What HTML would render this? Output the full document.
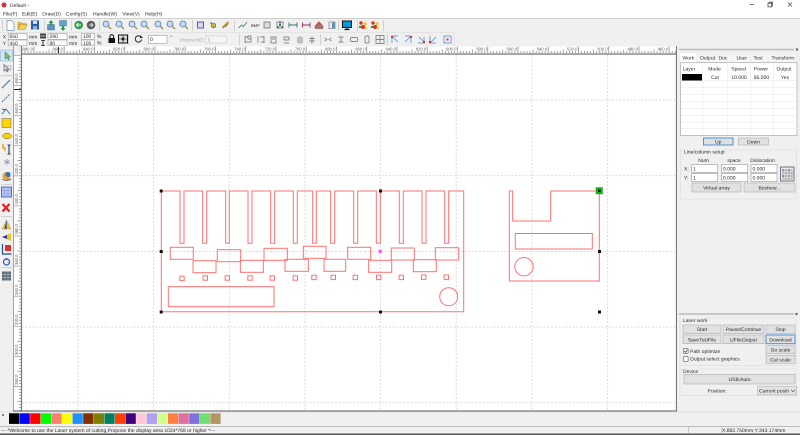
<!DOCTYPE html>
<html><head><meta charset="utf-8"><title>Default -</title>
<style>
html,body{margin:0;padding:0;background:#f0f0f0;overflow:hidden}
svg{display:block;filter:blur(.3px)}
text{font-family:"Liberation Sans",sans-serif;font-size:5px;fill:#2a2a2a;text-rendering:geometricPrecision}
.c{text-anchor:middle}
.r{font-size:4.2px;text-anchor:end;fill:#555}
.v{font-size:4.2px;fill:#555}
.b{fill:#e1e1e1;stroke:#adadad;stroke-width:.6}
.i{fill:#fff;stroke:#999;stroke-width:.6}
.s{stroke:#d0d0d0;stroke-width:1}
.d{stroke:#cfcfcf;stroke-width:.9;stroke-dasharray:1.6 2;fill:none}
.p{fill:none;stroke:#ff7070;stroke-width:1}
.g{fill:#222}
</style></head><body>
<svg width="800" height="435" viewBox="0 0 800 435" xmlns="http://www.w3.org/2000/svg">
<defs>
<pattern id="hr" width="30.25" height="8" patternUnits="userSpaceOnUse" x="3.2" y="46">
<path d="M.5 0V7M3.5 5V7M6.5 5V7M9.6 5V7M12.6 5V7M15.6 3.5V7M18.7 5V7M21.7 5V7M24.7 5V7M27.7 5V7" stroke="#666" stroke-width=".6" fill="none"/>
</pattern>
<pattern id="vr" width="8" height="30.1" patternUnits="userSpaceOnUse" x="14" y="85">
<path d="M0 .5H7M5 3.5H7M5 6.5H7M5 9.5H7M5 12.5H7M3.5 15.5H7M5 18.5H7M5 21.5H7M5 24.5H7M5 27.5H7" stroke="#666" stroke-width=".6" fill="none"/>
</pattern>
<g id="zm"><circle cx="-1" cy="-1" r="3" fill="#c8dcf0" stroke="#5478b4" stroke-width=".8"/><path d="M1.4 1.4L4 4" stroke="#9a8a40" stroke-width="1.3"/></g>
<g id="st"><rect x="-3" y="-3" width="6" height="6" fill="#fff" stroke="#555" stroke-width=".7"/><path d="M-1 -1h2v2h-2z" fill="#555"/></g>
<g id="sq"><circle cx="-2" cy="-2" r="1.7" fill="#e03020"/><circle cx="2" cy="-1" r="1.7" fill="#e8c820"/><circle cx="0" cy="2" r="2" fill="#e03020"/><circle cx="-3" cy="2" r="1.1" fill="#2a8a2a"/><circle cx="3" cy="3" r="1.1" fill="#e8c820"/></g>
</defs>

<!-- title bar -->
<rect width="800" height="18" fill="#fff"/>
<path d="M4 2.2v5.6M1.4 5h5.2M2.2 3.2l3.6 3.6M5.8 3.2l-3.6 3.6" stroke="#d8202a" stroke-width="1.2"/>
<text x="10" y="7">Default -</text>
<text x="3" y="15.5">File(F)</text><text x="22" y="15.5">Edit(E)</text><text x="42.3" y="15.5">Draw(D)</text><text x="66" y="15.5">Config(S)</text><text x="93" y="15.5">Handle(W)</text><text x="122.3" y="15.5">View(V)</text><text x="145" y="15.5">Help(H)</text>
<path d="M749.5 4.5h4.5" stroke="#555" stroke-width=".8"/>
<path d="M768 3.2h3.6v3.6h-3.6zM769 3.2v-1h3.6v3.6h-1" fill="none" stroke="#555" stroke-width=".8"/>
<path d="M788 2.5l4 4M792 2.5l-4 4" stroke="#555" stroke-width=".8"/>

<!-- toolbars -->
<rect y="18" width="800" height="29" fill="#f0f0f0"/>
<path d="M0 18.5H800" stroke="#cfcfcf" stroke-width="1"/>
<path d="M0 32.5H454M454 32V46" stroke="#e0e0e0" stroke-width=".7"/>
<path class="s" d="M2.5 20V31M44.5 20V31M71.5 20V31M99.5 20V31M192.5 20V31M234.5 20V31M338.5 20V31M357.5 20V31M383.5 20V31M128.5 34V45M239.5 34V45M320.5 34V45M387.5 34V45"/>
<!-- new open save -->
<path d="M7 20.5h4.5l2.5 2.5v7.5H7z" fill="#fff" stroke="#6d8fb8" stroke-width=".7"/>
<path d="M18 29.5v-7h3l1 1h4v1.5" fill="#e8b840" stroke="#b88a20" stroke-width=".6"/><path d="M18 29.5l2-5h7l-2 5z" fill="#f5d060" stroke="#b88a20" stroke-width=".6"/>
<path d="M31 20.5h8v9h-8z" fill="#2c5ea8"/><rect x="33" y="21" width="4" height="3" fill="#d8e4f4"/><rect x="33" y="26" width="4" height="3.5" fill="#8fb0dc"/>
<!-- import/export -->
<rect x="47.5" y="24.5" width="7" height="5.5" fill="#5b92c4" stroke="#31618e" stroke-width=".4"/><path d="M51 20l-2.5 3h1.5v2.5h2V23h1.5z" fill="#2f9a4a"/>
<rect x="59.5" y="20.5" width="7" height="5.5" fill="#6ca0cc" stroke="#31618e" stroke-width=".4"/><path d="M63 31l-2.5-3h1.5v-2.5h2V28h1.5z" fill="#2f9a4a"/>
<!-- green/gray circles -->
<circle cx="78.7" cy="25" r="4.3" fill="#2f9a48"/><path d="M81 25h-4M78.5 23l-2 2 2 2" stroke="#fff" stroke-width=".9" fill="none"/>
<circle cx="91" cy="25" r="4.3" fill="#5a5a5a"/><path d="M89 25h4M91 23l2 2-2 2" stroke="#ddd" stroke-width=".9" fill="none"/>
<!-- zooms -->
<use href="#zm" x="107" y="25"/><use href="#zm" x="120" y="25"/><use href="#zm" x="133" y="25"/><use href="#zm" x="145" y="25"/><use href="#zm" x="159" y="25"/><use href="#zm" x="171" y="25"/><use href="#zm" x="184" y="25"/>
<!-- misc -->
<rect x="197.5" y="22" width="6" height="6" fill="#d8d8f4" stroke="#7a4aa0" stroke-width="1"/>
<circle cx="213.5" cy="25.5" r="2.3" fill="#ccb640" stroke="#555" stroke-width=".6"/><circle cx="211" cy="23" r=".8" fill="#555"/>
<path d="M222.5 28l6-6" stroke="#bda020" stroke-width="2.2"/><path d="M225 27l3-3" stroke="#7a6ab0" stroke-width="1"/>
<path d="M238.5 28l3-3 2 1.5 3.5-4.5" fill="none" stroke="#2a7a80" stroke-width=".8"/>
<text x="251" y="27" style="font-size:4px">BMP</text>
<rect x="264" y="22" width="6" height="6" fill="#ddd" stroke="#666" stroke-width=".7"/>
<use href="#st" x="280" y="25"/>
<circle cx="280" cy="22.8" r="1" fill="#2a6ab0"/><circle cx="278" cy="27" r="1" fill="#2a6ab0"/><circle cx="282" cy="27" r="1" fill="#2a8a40"/>
<path d="M289 22.5v5M297 22.5v5M289 25h8" stroke="#2a7a60" stroke-width=".9" fill="none"/>
<path d="M302.5 22.5v5M310 22.5v5M302.5 25h7.5" stroke="#a03060" stroke-width=".9" fill="none"/>
<path d="M319 21.5l4 4.5v2.5h-8V26z" fill="#d05050" stroke="#803030" stroke-width=".4"/><rect x="315.5" y="25.5" width="7" height="2" fill="#888"/>
<rect x="329" y="22" width="6" height="6.5" fill="#f2f2f2" stroke="#666" stroke-width=".6"/><rect x="332" y="22.5" width="2.5" height="5.5" fill="#4a90c8"/>
<rect x="342.5" y="21" width="9" height="6.5" fill="#0a9ad8" stroke="#111" stroke-width="1"/><path d="M344.5 29.5h5M347 27.5v2" stroke="#111" stroke-width="1.2"/>
<use href="#sq" x="363" y="25"/><use href="#sq" x="375" y="25"/>

<!-- position row -->
<text x="2.7" y="38.3">X</text><text x="2.7" y="45">Y</text>
<rect class="i" x="8.2" y="33.5" width="18.8" height="6"/><rect class="i" x="8.2" y="40" width="18.8" height="5.7"/>
<text x="9.5" y="38.2">650</text><text x="9.5" y="44.8">450</text>
<text x="29" y="38.5">mm</text><text x="29" y="45">mm</text>
<rect x="40" y="33.5" width="6" height="5" fill="#444"/><path d="M40 36h6" stroke="#ddd" stroke-width=".7"/>
<path d="M43 40v5.5M41.3 40.5h3.4M41.3 45.5h3.4" stroke="#333" stroke-width="1"/>
<rect class="i" x="48" y="33.5" width="19" height="6"/><rect class="i" x="48" y="40" width="19" height="5.7"/>
<text x="49.5" y="38.2">290</text><text x="49.5" y="44.8">80</text>
<text x="69" y="38.5">mm</text><text x="69" y="45">mm</text>
<rect class="i" x="81.7" y="33.5" width="12.5" height="6"/><rect class="i" x="81.7" y="40" width="12.5" height="5.7"/>
<text x="83" y="38.2">100</text><text x="83" y="44.8">100</text>
<text x="97" y="37.8">%</text><text x="97" y="44.5">%</text>
<rect x="108.5" y="38" width="6.5" height="5" fill="#111"/><path d="M110 38v-2a1.8 1.8 0 0 1 3.5 0v2" fill="none" stroke="#111" stroke-width="1"/>
<rect x="118.5" y="35" width="9" height="8" fill="#ddd" stroke="#111" stroke-width="1"/><path d="M123 35.5v7M119 39h8" stroke="#111" stroke-width=".6"/><rect x="121.7" y="37.7" width="2.6" height="2.6" fill="#111"/>
<path d="M141 37a3.2 3.2 0 1 0 .6 2.5" fill="none" stroke="#222" stroke-width="1"/><path d="M140 35v3h3" fill="#222"/>
<rect class="i" x="148.5" y="35.5" width="18.5" height="8"/><text x="150" y="41">0</text><text x="170" y="39">°</text>
<text x="180" y="41.5" style="fill:#aaa;font-size:4.6px" textLength="24">Process NO:</text>
<rect x="205.5" y="36" width="21" height="7" fill="#f4f4f4" stroke="#ccc" stroke-width=".6"/><text x="207.5" y="41.5" style="fill:#999">1</text>
<!-- align icons -->
<g fill="none" stroke="#666" stroke-width=".7">
<path d="M245 36v7M251 36v7M245 37h3M245 42h5M248 36h3v3h-3z"/>
<path d="M258 36v7M264 36v7M260 37h4M261 42h3"/>
<path d="M271 37h5v6h-5zM272 39h3"/><path d="M284 37h5v3h-5zM284 43h5"/><path d="M298 37v6M302 37v6M300 36v8"/><path d="M309 38.5h6M309 41h6M312 36v8"/>
<path d="M324.5 38l2.5 1.5-2.5 1.5M331.5 38l-2.5 1.5 2.5 1.5"/><path d="M338.5 37h5M338.5 42h5M341 37v5"/>
<rect x="350.5" y="37.5" width="7" height="4" rx="1"/><rect x="365" y="36" width="4" height="7" rx="1"/>
<rect x="376" y="35.5" width="8" height="8"/><path d="M380 35.5v8M376 39.5h8"/>
</g>
<g fill="none" stroke="#4a80c0" stroke-width=".7">
<path d="M392 43v-7h6M393 37l5 5"/><path d="M405 36h6v7M410 37l-5 5"/><path d="M419 37l5 5M424 37v6h-6"/><path d="M430 36v7h6M431 42l5-5"/>
<rect x="444" y="36" width="7" height="7"/>
</g>
<rect x="391" y="36" width="2" height="2" fill="#d03040"/><rect x="410" y="36" width="2" height="2" fill="#d03040"/><rect x="423" y="41" width="2" height="2" fill="#d03040"/><rect x="429" y="41" width="2" height="2" fill="#d03040"/><rect x="446.5" y="38.5" width="2" height="2" fill="#d03040"/>

<!-- canvas -->
<rect x="22" y="55" width="654" height="356" fill="#fff"/>
<!-- rulers -->
<rect x="21" y="46.5" width="655" height="7" fill="#fff"/>
<rect x="21" y="46.5" width="655" height="7" fill="url(#hr)"/>
<rect x="14" y="55" width="7" height="356" fill="#fff"/>
<rect x="14" y="55" width="7" height="356" fill="url(#vr)"/>
<path d="M21 54H676" stroke="#777" stroke-width="1.2"/>
<path d="M21.5 46V411" stroke="#777" stroke-width="1.2"/>
<path d="M13.5 46V411" stroke="#999" stroke-width=".9"/>
<path d="M13 411H677" stroke="#777" stroke-width="1.2"/>
<path d="M676.5 46V411" stroke="#777" stroke-width="1.2"/>
<path d="M58.5 47v6" stroke="#222"/><path d="M14 89.5h7" stroke="#222"/>
<text class="r" x="33" y="50.5">880.0</text><text class="r" x="63" y="50.5">860.0</text><text class="r" x="93.5" y="50.5">840.0</text><text class="r" x="123.7" y="50.5">820.0</text><text class="r" x="154" y="50.5">800.0</text><text class="r" x="184.2" y="50.5">780.0</text><text class="r" x="214.5" y="50.5">760.0</text><text class="r" x="244.7" y="50.5">740.0</text><text class="r" x="275" y="50.5">720.0</text><text class="r" x="305.2" y="50.5">700.0</text><text class="r" x="335.5" y="50.5">680.0</text><text class="r" x="365.7" y="50.5">660.0</text><text class="r" x="396" y="50.5">640.0</text><text class="r" x="426.2" y="50.5">620.0</text><text class="r" x="456.5" y="50.5">600.0</text><text class="r" x="486.7" y="50.5">580.0</text><text class="r" x="517" y="50.5">560.0</text><text class="r" x="547.2" y="50.5">540.0</text><text class="r" x="577.5" y="50.5">520.0</text><text class="r" x="607.7" y="50.5">500.0</text><text class="r" x="638" y="50.5">480.0</text><text class="r" x="668.2" y="50.5">460.0</text>
<g>
<text class="v" transform="translate(18 84) rotate(-90)">480.0</text><text class="v" transform="translate(18 114) rotate(-90)">460.0</text><text class="v" transform="translate(18 144.5) rotate(-90)">440.0</text><text class="v" transform="translate(18 174.5) rotate(-90)">420.0</text><text class="v" transform="translate(18 204.5) rotate(-90)">400.0</text><text class="v" transform="translate(18 234.5) rotate(-90)">380.0</text><text class="v" transform="translate(18 265) rotate(-90)">360.0</text><text class="v" transform="translate(18 295) rotate(-90)">340.0</text><text class="v" transform="translate(18 325) rotate(-90)">320.0</text><text class="v" transform="translate(18 355) rotate(-90)">300.0</text><text class="v" transform="translate(18 385) rotate(-90)">280.0</text>
</g>
<!-- grid -->
<path class="d" d="M78 55V411M153.6 55V411M229.3 55V411M305 55V411M380.4 55V411M456.2 55V411M531.8 55V411M607.6 55V411M22 100H676M22 175.7H676M22 251.4H676M22 327H676M22 402.7H676"/>

<!-- drawing -->
<path class="p" d="M161.3 191H180V243.3H184V191H202.7V243.3H206.7V191H225.7V243.3H229.3V191H248V243.3H252V191H270.7V243.3H274.7V191H293.3V243.3H297.3V191H312.7V243.3H316.3V191H330.7V243.3H334.7V191H353.7V243.3H357.7V191H376.3V243.3H380.3V191H399.3V243.3H403.3V191H422V243.3H426V191H444.7V243.3H448.7V191H463.7V311.7H161.3Z"/>
<g class="p">
<rect x="170.3" y="247.3" width="23" height="12"/><rect x="193" y="260.7" width="23" height="12"/><rect x="217.3" y="249.7" width="23.4" height="12"/><rect x="240.3" y="260.3" width="23" height="12"/><rect x="264" y="248.3" width="23.3" height="12"/><rect x="285" y="259.3" width="23.3" height="12"/><rect x="303.3" y="246.3" width="22.7" height="12"/><rect x="324" y="259.3" width="21.7" height="12"/><rect x="347.7" y="247.3" width="23" height="12"/><rect x="368.7" y="260.3" width="23" height="12"/><rect x="391.3" y="248" width="23" height="12"/><rect x="413.3" y="259.7" width="23" height="12"/><rect x="435.3" y="247.7" width="23.4" height="12.3"/>
<rect x="179.8" y="276.2" width="4.4" height="4.4"/><rect x="203.1" y="275.8" width="4.4" height="4.4"/><rect x="225.1" y="275.8" width="4.4" height="4.4"/><rect x="247.8" y="275.8" width="4.4" height="4.4"/><rect x="270.1" y="275.8" width="4.4" height="4.4"/><rect x="293.1" y="275.8" width="4.4" height="4.4"/><rect x="311.8" y="275.2" width="4.4" height="4.4"/><rect x="331.1" y="275.2" width="4.4" height="4.4"/><rect x="353.1" y="275.2" width="4.4" height="4.4"/><rect x="376.5" y="275.2" width="4.4" height="4.4"/><rect x="399.1" y="275.2" width="4.4" height="4.4"/><rect x="421.5" y="275" width="4.4" height="4.4"/><rect x="444.1" y="275" width="4.4" height="4.4"/>
<rect x="168.3" y="286.7" width="105.7" height="20"/>
<circle cx="448.7" cy="296.7" r="9"/>
<path d="M509.3 191H512.7V221H550.7V191H599.3V281H509.3Z"/>
<rect x="515.3" y="233.5" width="77" height="15.5"/>
<circle cx="524" cy="266.7" r="9.2"/>
</g>
<!-- handles -->
<g fill="#111"><rect x="159.7" y="189.5" width="3" height="3"/><rect x="159.7" y="250" width="3" height="3"/><rect x="159.7" y="310.5" width="3" height="3"/><rect x="379" y="189.5" width="3" height="3"/><rect x="379" y="310.5" width="3" height="3"/><rect x="598" y="250" width="3" height="3"/><rect x="598" y="310.5" width="3" height="3"/></g>
<rect x="596" y="187.5" width="6.5" height="6.5" fill="#10c010" stroke="#0a8a0a" stroke-width=".4"/><rect x="598" y="189.5" width="2.6" height="2.6" fill="#111"/>
<path d="M378.7 249.9l3 3M381.7 249.9l-3 3" stroke="#ff20ff" stroke-width="1.1"/>

<!-- left toolbar -->
<rect x="0" y="46" width="13" height="366" fill="#f0f0f0"/>
<rect x=".5" y="50" width="12" height="11" fill="#d4e6f6" stroke="#8fb8dc" stroke-width=".6"/>
<path d="M5 51.5v7.5l2-1.5 1.5 2.5 1-.5-1.5-2.5h2.5z" fill="#7ac070" stroke="#2a7a3a" stroke-width=".5"/>
<path d="M4 64.5v6.5l1.8-1.3 1.3 2.2 1-.5-1.3-2.2h2.2z" fill="#dde" stroke="#556" stroke-width=".6"/><rect x="7" y="66" width="4" height="4" fill="none" stroke="#888" stroke-width=".5"/>
<path d="M2 88l8-8" stroke="#2a6ab0" stroke-width=".9"/>
<path d="M2 102l8-8" stroke="#2a6ab0" stroke-width=".9" stroke-dasharray="2 .7"/>
<path d="M2 114l4-5 4 5" fill="none" stroke="#2a6ab0" stroke-width=".9"/><path d="M2 109l3 1M10 109" stroke="#333" stroke-width=".7"/>
<rect x="2" y="118.5" width="9" height="9" fill="#ffd400" stroke="#666" stroke-width=".5"/>
<ellipse cx="7" cy="136" rx="4.5" ry="2.8" fill="#f6d008" stroke="#6a6a2a" stroke-width=".5"/>
<path d="M3 144v4h2v3" stroke="#e8a820" stroke-width="1.6" fill="none"/><path d="M7.5 145h3M9 145v9M7.5 154h3" stroke="#1f3a6a" stroke-width="1.1" fill="none"/>
<path d="M7 159v6M4.2 160.5l5.6 3M9.8 160.5l-5.6 3" stroke="#8a98a8" stroke-width=".8"/>
<circle cx="6.5" cy="176" r="4" fill="#e8a030"/><circle cx="8" cy="174.5" r="2.5" fill="#2a70c0"/><path d="M2 179.5c3 1.2 7 1.2 9-.5" stroke="#555" stroke-width=".9" fill="none"/>
<rect x="1.5" y="187" width="10" height="10" fill="#b8c4f0" stroke="#2a58b0" stroke-width=".8"/><path d="M4.5 187v10M8 187v10M1.5 190.5h10M1.5 194h10" stroke="#7c8ad8" stroke-width=".4"/>
<path d="M2.5 204l7 7.5M9.5 204l-7 7.5" stroke="#e41e28" stroke-width="2.2"/>
<path d="M6.5 220v9H2zM6.5 220v9H11z" fill="#f0c820" stroke="#777" stroke-width=".3"/><path d="M6.5 220v9l-2 0z" fill="#2a3ac0"/>
<path d="M2 237l9-4v8z" fill="#e8c820"/><path d="M2 237l5-2v4z" fill="#2a3ac0"/>
<path d="M2.5 244v10h9" fill="none" stroke="#24489a" stroke-width="1.2"/><rect x="5" y="245" width="6" height="6" fill="#e03030"/>
<circle cx="6.5" cy="262" r="3" fill="none" stroke="#2a50c0" stroke-width="1.2"/><circle cx="6.5" cy="259" r=".9" fill="#2a50c0"/>
<rect x="2" y="271.5" width="9" height="9" fill="#5a6a70"/><path d="M5 271.5v9M8 271.5v9M2 274.5h9M2 277.5h9" stroke="#c0ccd0" stroke-width=".5"/>
<path class="s" d="M1 75.5H12M1 184.5H12M1 216.5H12M1 267.5H12" stroke-width=".6"/>

<!-- right panel -->
<rect x="677" y="46" width="123" height="366" fill="#f0f0f0"/>
<path d="M679 49.5H794" stroke="#bbb" stroke-width="1.5"/>
<path d="M796 48.5l2 2M798 48.5l-2 2" stroke="#333" stroke-width=".7"/>
<rect x="680.5" y="53.5" width="15" height="9" fill="#fff"/>
<g fill="#f6f6f6"><rect x="698" y="55" width="15" height="7"/><rect x="717" y="55" width="15" height="7"/><rect x="734" y="55" width="15" height="7"/><rect x="752" y="55" width="15" height="7"/><rect x="769" y="55" width="25" height="7"/></g>
<text x="682.5" y="59.7">Work</text><text x="700" y="59.7">Output</text><text x="718.5" y="59.7">Doc</text><text x="736.5" y="59.7">User</text><text x="753.5" y="59.7">Test</text><text x="771.5" y="59.7">Transform</text>
<rect x="680.5" y="62.7" width="116.5" height="72.8" fill="#fff" stroke="#aaa" stroke-width=".7"/>
<path d="M681 80.5H797M681 87.5H797M681 94.5H797M681 101.5H797M681 108.5H797M681 115.5H797M681 122H797M681 128.5H797M702.5 63V135M727.5 63V135M750.5 63V135M773.5 63V135" stroke="#ededed" stroke-width=".7"/>
<rect x="682" y="74" width="20" height="6.5" fill="#000"/>
<text class="c" x="689" y="70.5">Layer</text><text class="c" x="714.5" y="70.5">Mode</text><text class="c" x="738.5" y="70.5">Speed</text><text class="c" x="761" y="70.5">Power</text><text class="c" x="784" y="70.5">Output</text>
<text class="c" x="715" y="79">Cut</text><text class="c" x="739" y="79">10.000</text><text class="c" x="761.5" y="79">85.000</text><text class="c" x="785" y="79">Yes</text>
<rect x="703.5" y="138" width="29.5" height="7" fill="#e1e1e1" stroke="#3a8cd0" stroke-width=".9"/><text class="c" x="718.2" y="143.5">Up</text>
<rect class="b" x="738.5" y="138" width="30" height="7"/><text class="c" x="753.5" y="143.5">Down</text>
<!-- line/column -->
<rect x="680.5" y="150" width="116" height="49" fill="none" stroke="#ddd" stroke-width=".7"/>
<rect x="683" y="149" width="40" height="6" fill="#f0f0f0"/>
<text x="684" y="153.7">Line/column setup</text>
<text class="c" x="703.5" y="162">Num</text><text class="c" x="734" y="162">space</text><text class="c" x="762.5" y="162">Dislocation</text>
<text x="684" y="170.5">X:</text><text x="684" y="179.5">Y:</text>
<rect class="i" x="691.7" y="164.5" width="26" height="8"/><rect class="i" x="721.7" y="164.5" width="26" height="8"/><rect class="i" x="751" y="164.5" width="26" height="8"/>
<rect class="i" x="691.7" y="173.5" width="26" height="8"/><rect class="i" x="721.7" y="173.5" width="26" height="8"/><rect class="i" x="751" y="173.5" width="26" height="8"/>
<text x="693" y="170.3">1</text><text x="723" y="170.3">0.000</text><text x="752.5" y="170.3">0.000</text>
<text x="693" y="179.3">1</text><text x="723" y="179.3">0.000</text><text x="752.5" y="179.3">0.000</text>
<rect x="780.5" y="167" width="13.5" height="14" fill="#e8e8e8" stroke="#444" stroke-width=".7"/>
<path d="M783 170h9v9h-9zM786 170v9M789 170v9M783 173h9M783 176h9" fill="none" stroke="#555" stroke-width=".4"/><circle cx="783" cy="170" r=".8" fill="#2a50c0"/><circle cx="789" cy="170" r=".8" fill="#2a50c0"/><circle cx="783" cy="176" r=".8" fill="#2a50c0"/>
<rect class="b" x="692" y="183" width="49" height="9"/><text class="c" x="716.5" y="189.5">Virtual array</text>
<rect class="b" x="744" y="183" width="51" height="9"/><text class="c" x="769.5" y="189.5">Bestrew...</text>
<!-- laser work -->
<path d="M679 314H794" stroke="#bbb" stroke-width="1.5"/>
<path d="M795.5 313l2 2M797.5 313l-2 2" stroke="#333" stroke-width=".7"/>
<rect x="680" y="318" width="116" height="47.5" fill="none" stroke="#ddd" stroke-width=".7"/>
<rect x="682.5" y="317" width="24" height="6" fill="#f0f0f0"/>
<text x="683" y="322">Laser work</text>
<rect class="b" x="683" y="325" width="38" height="8.5"/><text class="c" x="702" y="331.2">Start</text>
<rect class="b" x="723" y="325" width="41" height="8.5"/><text class="c" x="743.5" y="331.2">Pause/Continue</text>
<rect class="b" x="766" y="325" width="29" height="8.5"/><text class="c" x="780.5" y="331.2">Stop</text>
<rect class="b" x="683" y="335" width="38" height="8.7"/><text class="c" x="702" y="341.3">SaveToUFile</text>
<rect class="b" x="723" y="335" width="41" height="8.7"/><text class="c" x="743.5" y="341.3">UFileOutput</text>
<rect x="766" y="335" width="29" height="8.7" fill="#e1e1e1" stroke="#3a8cd0" stroke-width=".9"/><text class="c" x="780.5" y="341.3">Download</text>
<rect class="b" x="766" y="345.7" width="29" height="8"/><text class="c" x="780.5" y="351.7">Go scale</text>
<rect class="b" x="766" y="355.3" width="29" height="8"/><text class="c" x="780.5" y="361.3">Cut scale</text>
<rect x="683.5" y="348.7" width="4.6" height="4.6" fill="#fff" stroke="#555" stroke-width=".6"/><path d="M684.3 351l1.2 1.3 2-2.6" fill="none" stroke="#333" stroke-width=".7"/>
<text x="690" y="353">Path optimize</text>
<rect x="683.5" y="356.7" width="4.6" height="4.6" fill="#fff" stroke="#555" stroke-width=".6"/>
<text x="690" y="360.7">Output select graphics</text>
<!-- device -->
<rect x="680" y="369" width="116" height="26.5" fill="none" stroke="#ddd" stroke-width=".7"/>
<rect x="682.5" y="368" width="16" height="6" fill="#f0f0f0"/>
<text x="683" y="372.8">Device</text>
<rect class="b" x="684" y="374.3" width="111" height="9.7"/><text class="c" x="739.5" y="381">USB:Auto</text>
<text x="707.5" y="392.7">Position:</text>
<rect x="757.7" y="386.7" width="39" height="8.2" fill="#e4e4e4" stroke="#adadad" stroke-width=".6"/>
<text x="759" y="392.6">Current positi</text><path d="M791 389.8l2 2 2-2" fill="none" stroke="#444" stroke-width=".6"/>

<!-- palette -->
<rect y="412" width="800" height="14.5" fill="#f0f0f0"/>
<path d="M0 412H800" stroke="#ccc" stroke-width=".6"/>
<circle cx="3" cy="415" r=".9" fill="#333"/>
<rect x="9" y="413.3" width="10.2" height="10.6" fill="#000"/>
<rect x="19.6" y="413.3" width="10.2" height="10.6" fill="#0000ff"/>
<rect x="30.2" y="413.3" width="10.2" height="10.6" fill="#ff0000"/>
<rect x="40.8" y="413.3" width="10.2" height="10.6" fill="#00ff00"/>
<rect x="51.4" y="413.3" width="10.2" height="10.6" fill="#ff8070"/>
<rect x="62" y="413.3" width="10.2" height="10.6" fill="#ffff00"/>
<rect x="72.6" y="413.3" width="10.2" height="10.6" fill="#2090ff"/>
<rect x="83.2" y="413.3" width="10.2" height="10.6" fill="#803000"/>
<rect x="93.8" y="413.3" width="10.2" height="10.6" fill="#808000"/>
<rect x="104.4" y="413.3" width="10.2" height="10.6" fill="#008060"/>
<rect x="115" y="413.3" width="10.2" height="10.6" fill="#ff4000"/>
<rect x="125.6" y="413.3" width="10.2" height="10.6" fill="#400080"/>
<rect x="136.2" y="413.3" width="10.2" height="10.6" fill="#ffc8d8"/>
<rect x="146.8" y="413.3" width="10.2" height="10.6" fill="#b0a0f0"/>
<rect x="157.4" y="413.3" width="10.2" height="10.6" fill="#d0ff90"/>
<rect x="168" y="413.3" width="10.2" height="10.6" fill="#ff8040"/>
<rect x="178.6" y="413.3" width="10.2" height="10.6" fill="#e070a0"/>
<rect x="189.2" y="413.3" width="10.2" height="10.6" fill="#8070e0"/>
<rect x="199.8" y="413.3" width="10.2" height="10.6" fill="#70e070"/>
<rect x="210.4" y="413.3" width="10.2" height="10.6" fill="#b09860"/>

<!-- status bar -->
<rect y="426.5" width="800" height="7" fill="#f0f0f0"/>
<path d="M0 426.5H800" stroke="#aaa" stroke-width=".7"/>
<path d="M688.5 427V433M721.5 427V433" stroke="#bbb" stroke-width=".7"/>
<text x="1" y="432">--- *Welcome to use the Laser system of cutting,Propose the display area 1024*768 or higher *---</text>
<text x="722" y="432">X:862.750mm,Y:343.174mm</text>
<rect y="433.5" width="800" height="1.5" fill="#555"/>
</svg>
</body></html>
